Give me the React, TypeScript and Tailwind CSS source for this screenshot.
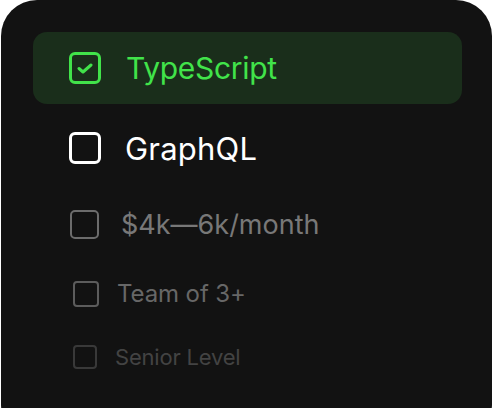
import React from "react";

function Box({ cls, checked }: { cls: string; checked?: boolean }) {
  return (
    <div className={`flex shrink-0 items-center justify-center ${cls}`}>
      {checked && (
        <svg width="16" height="11" viewBox="0 0 16 11" fill="none">
          <path
            d="M2 5.5 L6 9 L14 2"
            stroke="#41e34a"
            strokeWidth="3"
            strokeLinecap="round"
            strokeLinejoin="round"
          />
        </svg>
      )}
    </div>
  );
}

export default function App() {
  const font = { fontFamily: "Inter, 'Noto Sans', sans-serif" };
  return (
    <div className="w-[492px] h-[408px] bg-white overflow-hidden" style={font}>
      <div className="ml-px w-[491px] h-[440px] rounded-[36px] bg-[#121212] pt-8 px-8">
        <div className="flex h-[72px] w-[429px] items-center rounded-[14px] bg-[#1a2e1b] pl-9">
          <Box
            checked
            cls="h-8 w-8 rounded-[6px] border-[3px] border-[#41e34a]"
          />
          <span className="ml-[25px] text-[30px] leading-none tracking-[-0.3px] text-[#41e34a]">
            TypeScript
          </span>
        </div>
        <div className="flex h-[88px] items-center pl-9">
          <Box cls="h-8 w-8 rounded-[6px] border-[3px] border-white" />
          <span className="ml-[24px] text-[31px] leading-none tracking-[0.2px] text-white">
            GraphQL
          </span>
        </div>
        <div className="flex h-[64px] items-center pl-[37px]">
          <Box cls="h-[29px] w-[29px] rounded-[5px] border-[2.5px] border-[#6c6c6c]" />
          <span className="ml-[22px] text-[27px] leading-none tracking-[0px] text-[#787878]">
            $4k—6k/month
          </span>
        </div>
        <div className="flex h-[76px] items-center pl-[40px]">
          <Box cls="h-[26px] w-[26px] rounded-[4px] border-2 border-[#5c5c5c]" />
          <span className="ml-[18px] text-[24px] leading-none tracking-[-0.1px] text-[#676767]">
            Team of 3+
          </span>
        </div>
        <div className="flex h-[50px] items-center pl-[40px]">
          <Box cls="h-[24px] w-[24px] rounded-[4px] border-2 border-[#393939]" />
          <span className="ml-[18px] text-[22px] leading-none tracking-[-0.2px] text-[#434343]">
            Senior Level
          </span>
        </div>
      </div>
    </div>
  );
}
